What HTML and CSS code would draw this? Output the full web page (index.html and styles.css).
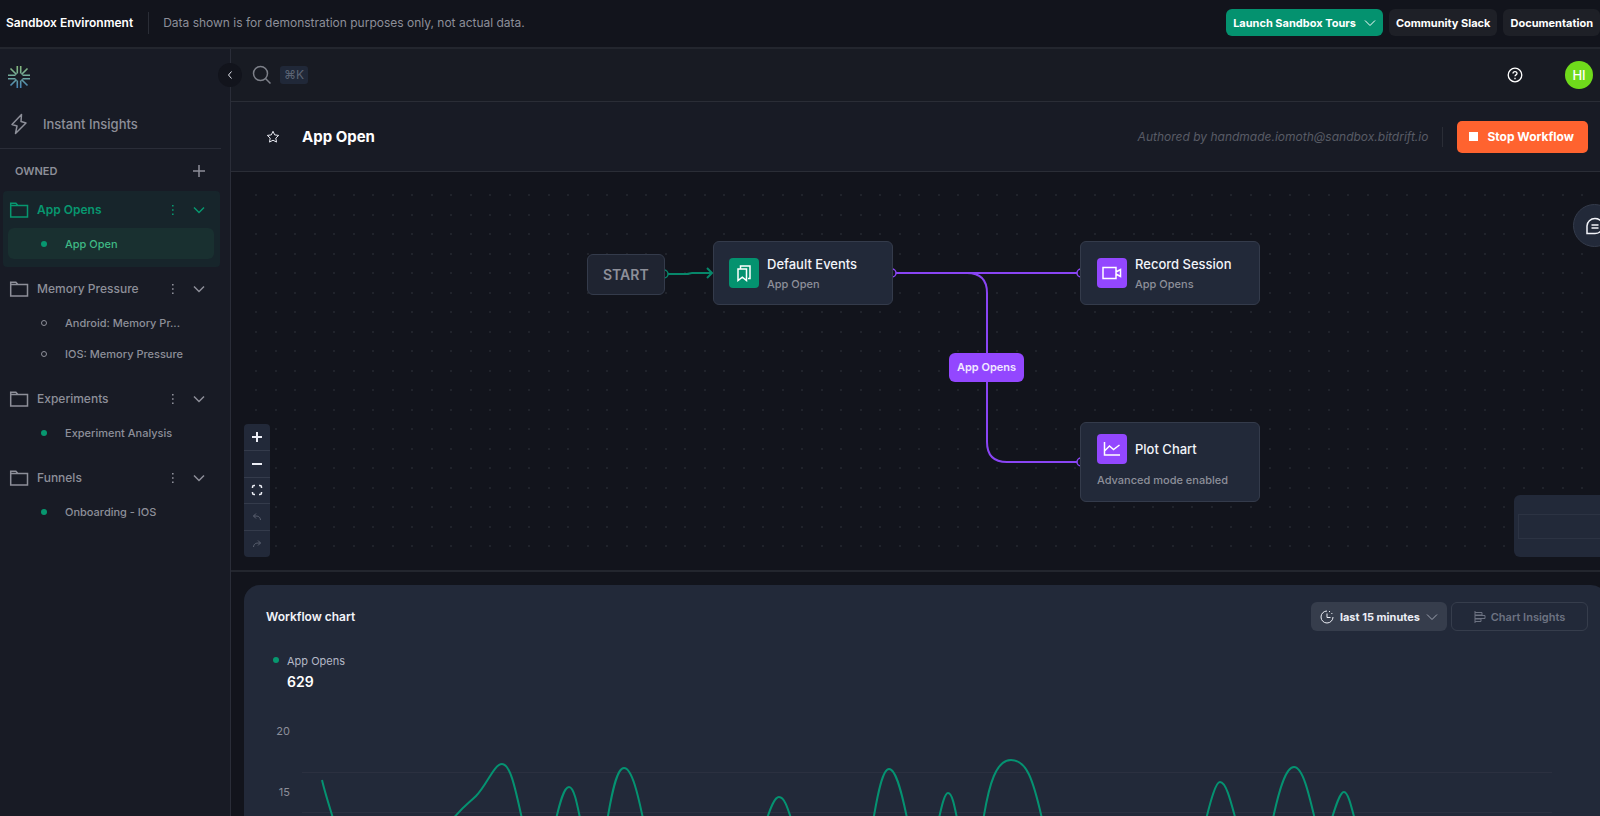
FILE: index.html
```
<!DOCTYPE html>
<html lang="en">
<head>
  <meta charset="UTF-8" />
  <meta name="viewport" content="width=device-width, initial-scale=1.0"/>
  <title>App Open - Workflow</title>
  <link rel="stylesheet" href="styles.css">
</head>
<body>
  <!-- shared icons -->
  <svg class="sprite" aria-hidden="true">
    <symbol id="folder" viewBox="0 0 20 20">
      <path d="M1.7 17V3.2h5.2l2 2.2h9.6V17zM1.7 5.4h7" />
    </symbol>
    <symbol id="chevron" viewBox="0 0 12 12">
      <path d="M1 3.5l5 5 5-5" />
    </symbol>
    <symbol id="dots" viewBox="0 0 4 12">
      <path d="M1 1h1.6v1.6H1zM1 5.2h1.6v1.6H1zM1 9.4h1.6V11H1z" />
    </symbol>
  </svg>

  <header class="sandbox-bar">
    <strong class="sandbox-title">Sandbox Environment</strong>
    <p class="sandbox-note">Data shown is for demonstration purposes only, not actual data.</p>
    <nav class="sandbox-links">
      <button class="btn btn-tours" type="button">Launch Sandbox Tours
        <svg class="icon-12"><use href="#chevron"/></svg>
      </button>
      <a class="btn btn-dark" href="#slack">Community Slack</a>
      <a class="btn btn-dark" href="#docs">Documentation</a>
    </nav>
  </header>

  <div class="shell">
    <aside class="sidebar">
      <a class="logo" href="#home" aria-label="Home">
        <svg width="22" height="22" viewBox="0 0 22 22">
          <defs>
            <linearGradient id="logoFill" gradientUnits="userSpaceOnUse" x1="0" y1="0" x2="0" y2="22">
              <stop offset="0" stop-color="#86b87c"/>
              <stop offset="0.5" stop-color="#6fa89f"/>
              <stop offset="1" stop-color="#4480b5"/>
            </linearGradient>
          </defs>
          <path stroke="url(#logoFill)" stroke-width="1.6" fill="none"
            d="M9.3 0v7.5M12.7 0v7.5M9.3 22v-7.5M12.7 22v-7.5M0 9.3h7.5M0 12.7h7.5M22 9.3h-7.5M22 12.7h-7.5M2.5 2.5l6 6M19.5 2.5l-6 6M2.5 19.5l6-6M19.5 19.5l-6-6"/>
        </svg>
      </a>
      <button class="collapse" type="button" aria-label="Collapse sidebar">
        <svg width="8" height="10" viewBox="0 0 8 10"><path d="M5.5 1.5L2.5 5l3 3.5"/></svg>
      </button>

      <a class="insights" href="#insights">
        <svg width="18" height="22" viewBox="0 0 18 22"><path d="M11.5 1.5L2 11.5l5 1.5-1.5 7.5L16 10l-5-1.5z"/></svg>
        Instant Insights
      </a>

      <div class="owned-head">
        <h2>OWNED</h2>
        <button type="button" aria-label="Add workflow">
          <svg width="12" height="12" viewBox="0 0 12 12"><path d="M6 0v12M0 6h12"/></svg>
        </button>
      </div>

      <ul class="groups">
        <li class="group active">
          <div class="group-row">
            <svg class="folder"><use href="#folder"/></svg>
            <span class="group-name">App Opens</span>
            <button type="button" aria-label="App Opens options"><svg class="kebab"><use href="#dots"/></svg></button>
            <button type="button" aria-label="Toggle App Opens"><svg class="icon-12"><use href="#chevron"/></svg></button>
          </div>
          <a class="item current" href="#app-open"><i class="dot"></i><span>App Open</span></a>
        </li>
        <li class="group">
          <div class="group-row">
            <svg class="folder"><use href="#folder"/></svg>
            <span class="group-name">Memory Pressure</span>
            <button type="button" aria-label="Memory Pressure options"><svg class="kebab"><use href="#dots"/></svg></button>
            <button type="button" aria-label="Toggle Memory Pressure"><svg class="icon-12"><use href="#chevron"/></svg></button>
          </div>
          <a class="item" href="#android"><i class="dot hollow"></i><span>Android: Memory Pr...</span></a>
          <a class="item" href="#ios"><i class="dot hollow"></i><span>IOS: Memory Pressure</span></a>
        </li>
        <li class="group">
          <div class="group-row">
            <svg class="folder"><use href="#folder"/></svg>
            <span class="group-name">Experiments</span>
            <button type="button" aria-label="Experiments options"><svg class="kebab"><use href="#dots"/></svg></button>
            <button type="button" aria-label="Toggle Experiments"><svg class="icon-12"><use href="#chevron"/></svg></button>
          </div>
          <a class="item" href="#experiment"><i class="dot"></i><span>Experiment Analysis</span></a>
        </li>
        <li class="group">
          <div class="group-row">
            <svg class="folder"><use href="#folder"/></svg>
            <span class="group-name">Funnels</span>
            <button type="button" aria-label="Funnels options"><svg class="kebab"><use href="#dots"/></svg></button>
            <button type="button" aria-label="Toggle Funnels"><svg class="icon-12"><use href="#chevron"/></svg></button>
          </div>
          <a class="item" href="#onboarding"><i class="dot"></i><span>Onboarding - IOS</span></a>
        </li>
      </ul>
    </aside>

    <main class="main">
      <div class="topbar">
        <button class="search" type="button" aria-label="Search">
          <svg width="20" height="20" viewBox="0 0 20 20"><circle cx="8.5" cy="8.5" r="7"/><path d="M13.5 13.5l5 5"/></svg>
          <kbd>⌘K</kbd>
        </button>
        <button class="help" type="button" aria-label="Help">
          <svg width="16" height="16" viewBox="0 0 16 16"><circle cx="8" cy="8" r="6.8"/><path d="M6 6.5c0-2.6 4-2.6 4 0 0 1.4-2 1.4-2 2.8M8 10.8v1.4"/></svg>
        </button>
        <button class="avatar" type="button">HI</button>
      </div>

      <div class="titlebar">
        <button class="star" type="button" aria-label="Favorite">
          <svg width="14" height="14" viewBox="0 0 14 14"><path d="M7 1.3l1.7 3.6 4 .5-2.9 2.7.7 4L7 10.2l-3.5 1.9.7-4L1.3 5.4l4-.5z"/></svg>
        </button>
        <h1>App Open</h1>
        <span class="author">Authored by handmade.iomoth@sandbox.bitdrift.io</span>
        <button class="btn-stop" type="button"><i></i>Stop Workflow</button>
      </div>

      <section class="canvas">
        <svg class="edges" width="1100" height="398" viewBox="0 0 1100 398">
          <g class="edge-green">
            <path d="M437 102h19c2 0 3-1 5-1h20M476 96l5 5-5 5"/>
            <circle cx="433" cy="102" r="4"/>
          </g>
          <g class="edge-purple">
            <path d="M665 101h182"/>
            <path d="M730 101h6q20 0 20 20v149q0 20 20 20h71"/>
            <circle cx="661" cy="101" r="4"/>
            <circle cx="850" cy="101" r="4"/>
            <circle cx="850" cy="290" r="4"/>
          </g>
        </svg>

        <div class="node node-start">START</div>
        <div class="node node-events">
          <span class="tile green">
            <svg width="16" height="18" viewBox="0 0 16 18"><path d="M2 5h8.5v11.5l-4.2-3.4L2 16.5zM4.5 5V2H14v12.5h-2"/></svg>
          </span>
          <div><h3>Default Events</h3><p>App Open</p></div>
        </div>
        <div class="node node-record">
          <span class="tile">
            <svg width="20" height="14" viewBox="0 0 20 14"><path d="M1 1.5h13v11H1zM14 6l4.5-2.5v7L14 8"/></svg>
          </span>
          <div><h3>Record Session</h3><p>App Opens</p></div>
        </div>
        <div class="node node-plot">
          <span class="tile">
            <svg width="18" height="16" viewBox="0 0 18 16"><path d="M1.5 1v13H17M1.5 10l5-5 4 3.5L16.5 4"/></svg>
          </span>
          <h3>Plot Chart</h3>
          <p>Advanced mode enabled</p>
        </div>
        <span class="edge-label">App Opens</span>

        <div class="zoom">
          <button type="button" aria-label="Zoom in"><svg viewBox="0 0 12 12"><path d="M6 1v10M1 6h10"/></svg></button>
          <button type="button" aria-label="Zoom out"><svg viewBox="0 0 12 12"><path d="M1 6h10"/></svg></button>
          <button type="button" aria-label="Fit view"><svg class="fit" viewBox="0 0 12 12"><path d="M1.5 4V3q0-1.5 1.5-1.5h1M8 1.5h1q1.5 0 1.5 1.5v1M10.5 8v1q0 1.5-1.5 1.5H8M4 10.5H3Q1.5 10.5 1.5 9V8"/></svg></button>
          <button type="button" aria-label="Undo" disabled><svg class="thin" viewBox="0 0 12 12"><path d="M5 2.5L2.5 5 5 7.5M2.5 5c4 0 6.5 0 7 4"/></svg></button>
          <button type="button" aria-label="Redo" disabled><svg class="thin" viewBox="0 0 12 12"><path d="M7 2.5L9.5 5 7 7.5M9.5 5c-4 0-6.5 0-7 4"/></svg></button>
        </div>

        <button class="chat" type="button" aria-label="Open chat">
          <svg width="20" height="20" viewBox="0 0 20 20"><path d="M2 17.5V10a8 7.5 0 1 1 8 7.5zM6.5 9h7M6.5 12h7"/></svg>
        </button>
        <div class="minimap"><span></span></div>
      </section>

      <section class="chart-card">
        <div class="chart-head">
          <h2>Workflow chart</h2>
          <label class="range">
            <svg width="14" height="14" viewBox="0 0 14 14"><path d="M7 1a6 6 0 1 0 6 6M7 3.5v4h3.5M9 1.3l1 .5M11.5 3l.7 1"/></svg>
            <select aria-label="Time range">
              <option>last 15 minutes</option>
            </select>
            <svg class="icon-12"><use href="#chevron"/></svg>
          </label>
          <button class="btn-insights" type="button">
            <svg width="12" height="12" viewBox="0 0 12 12"><path d="M1 0v12M1 1.5h7V4H1M1 4.5h10v3H1M1 8h6v2.5H1"/></svg>
            Chart Insights
          </button>
        </div>

        <div class="legend">
          <i class="dot"></i>
          <div><p>App Opens</p><strong>629</strong></div>
        </div>

        <div class="plot">
          <div class="axis"><span>20</span><span>15</span></div>
          <svg class="series" width="1290" height="130" viewBox="302 716 1290 130">
            <path class="grid" d="M302 772.5h1250M302 812.5h1250"/>
            <path class="line" d="M322 780C325 793 329 805 336 828
              M446 828C460 808 468 804 476 796C487 785 494 764 502 764C511 764 516 792 524 828
              M554 828C560 801 564 787 569 787C574 787 577 803 582 828
              M606 828C612 790 617 768 624 768C632 768 638 794 645 828
              M764 828C771 805 775 797 779 797C784 797 787 805 794 828
              M872 828C878 790 883 769 889 769C896 769 902 792 909 828
              M937 828C942 803 945 793 948 793C952 793 954 803 959 828
              M982 828C989 780 997 760 1011 760C1026 760 1033 776 1044 828
              M1204 828C1211 798 1216 782 1220 782C1226 782 1230 798 1238 828
              M1271 828C1279 788 1286 767 1294 767C1303 767 1309 794 1317 828
              M1329 828C1336 804 1340 792 1344 792C1348 792 1351 805 1357 828"/>
          </svg>
        </div>
      </section>
    </main>
  </div>
</body>
</html>
```
FILE: styles.css
```
* {
  box-sizing: border-box;
}

body {
  margin: 0;
  height: 100vh;
  display: flex;
  flex-direction: column;
  overflow: hidden;
  font-family: Inter, "Open Sans", sans-serif;
  font-size: 13px;
  line-height: 16px;
  color: #8d8f99;
  background: #12141c;
}

h1, h2, h3, p, ul {
  margin: 0;
  padding: 0;
}

button {
  font: inherit;
  color: inherit;
  background: none;
  border: 0;
  padding: 0;
  display: flex;
  align-items: center;
  justify-content: center;
}

a {
  color: inherit;
  text-decoration: none;
}

svg {
  fill: none;
  stroke: currentColor;
  flex: none;
}

.sprite {
  display: none;
}

.icon-12 {
  width: 12px;
  height: 12px;
}

/* sandbox bar */
.sandbox-bar {
  display: flex;
  align-items: center;
  flex: none;
  height: 49px;
  padding-left: 6px;
  padding-bottom: 2px;
  border-bottom: 2px solid #23262e;
}

.sandbox-title {
  color: #fff;
  font-weight: 600;
  font-size: 12px;
  padding-right: 15px;
}

.sandbox-note {
  border-left: 1px solid #2a2d36;
  padding: 3px 0 3px 14px;
  font-size: 12px;
}

.sandbox-links {
  margin-left: auto;
  display: flex;
  align-items: center;
  gap: 6px;
}

.btn {
  display: flex;
  align-items: center;
  gap: 8px;
  height: 27px;
  padding: 0 7px;
  border-radius: 6px;
  color: #fff;
  font-size: 11px;
  font-weight: 700;
  white-space: nowrap;
}

.btn-tours {
  background: #04926f;
}

.btn-dark {
  background: #1e2027;
}

.shell {
  flex: 1;
  min-height: 0;
  display: grid;
  grid-template-columns: 231px minmax(0, 1fr);
}

/* sidebar */
.sidebar {
  position: relative;
  display: flex;
  flex-direction: column;
  background: #181b25;
  border-right: 1px solid #2a2d38;
}

.logo {
  padding: 17px 8px 0;
  height: 52px;
}

.collapse {
  position: absolute;
  z-index: 2;
  right: -12px;
  top: 14px;
  width: 24px;
  height: 24px;
  border-radius: 12px;
  background: #12141c;
  color: #e4e6ee;
}

.insights {
  display: flex;
  align-items: center;
  gap: 15px;
  height: 48px;
  margin-right: 9px;
  padding: 0 10px 2px;
  border-bottom: 1px solid #2a2d38;
  font-weight: 500;
}

.insights svg {
  stroke-width: 1.5;
  stroke-linejoin: round;
}

.owned-head {
  display: flex;
  align-items: center;
  justify-content: space-between;
  height: 42px;
  padding: 2px 25px 0 15px;
}

.owned-head h2 {
  font-size: 11px;
  font-weight: 600;
}

.owned-head svg {
  stroke-width: 1.5;
}

.groups {
  list-style: none;
  display: flex;
  flex-direction: column;
  gap: 3px;
}

.group {
  margin: 0 10px 0 3px;
  padding-bottom: 8px;
  border-radius: 4px;
}

.group.active {
  background: #17252b;
  color: #07976f;
}

.group-row {
  display: flex;
  align-items: center;
  height: 37px;
  padding: 0 15px 0 6px;
}

.group-row .icon-12 {
  stroke-width: 1.5;
}

.folder {
  width: 20px;
  height: 20px;
  stroke-width: 1.5;
}

.group-name {
  flex: 1;
  padding-left: 8px;
  font-size: 12px;
  font-weight: 500;
}

.active .group-name {
  font-weight: 600;
}

.group-row button + button {
  margin-left: 18px;
}

.kebab {
  width: 4px;
  height: 12px;
  fill: currentColor;
  stroke: none;
}

.item {
  display: flex;
  align-items: center;
  gap: 18px;
  height: 31px;
  margin: 0 6px 0 5px;
  padding-left: 33px;
  font-size: 11px;
  font-weight: 500;
  border-radius: 6px;
}

.item.current {
  background: #193030;
  color: #3fb985;
}

.dot {
  width: 6px;
  height: 6px;
  border-radius: 3px;
  background: #07976f;
}

.dot.hollow {
  background: none;
  border: 1px solid #8d8f99;
}

/* main column */
.main {
  display: flex;
  flex-direction: column;
  min-height: 0;
  overflow: hidden;
}

.topbar {
  display: flex;
  align-items: center;
  flex: none;
  height: 53px;
  padding: 0 7px 0 21px;
  background: #181b23;
  border-bottom: 1px solid #2a2d36;
}

.search {
  gap: 8px;
  color: #7d8089;
}

.search svg {
  stroke-width: 1.5;
}

kbd {
  padding: 0 4px;
  border-radius: 3px;
  background: #202838;
  color: #5c6474;
  font-family: Inter, "DejaVu Sans", sans-serif;
  font-size: 12px;
  line-height: 18px;
}

.help {
  margin-left: auto;
  color: #fff;
}

.help svg {
  stroke-width: 1.3;
}

.avatar {
  width: 28px;
  height: 28px;
  margin-left: 42px;
  border-radius: 14px;
  background: #6fda1b;
  color: #fff;
  font-weight: 500;
}

.titlebar {
  display: flex;
  align-items: center;
  flex: none;
  height: 70px;
  padding: 0 12px 0 35px;
  background: #181b25;
  border-bottom: 1px solid #2a2d36;
}

.star {
  color: #e8eaf2;
}

h1 {
  margin-left: 22px;
  color: #fff;
  font-size: 15px;
  font-weight: 700;
}

.author {
  margin-left: auto;
  padding-right: 14px;
  border-right: 1px solid #2a2d36;
  color: #585b66;
  font-size: 12px;
  font-style: italic;
  line-height: 20px;
}

.btn-stop {
  gap: 9px;
  height: 32px;
  margin-left: 14px;
  padding: 0 14px 0 12px;
  border-radius: 5px;
  background: #ff632f;
  color: #fff;
  font-size: 12px;
  font-weight: 700;
}

.btn-stop i {
  width: 9px;
  height: 9px;
  background: #fff;
}

/* workflow canvas, the dot grid starts inside the padding */
.canvas {
  position: relative;
  flex: none;
  height: 400px;
  padding: 20px 0 12px 20px;
  overflow: hidden;
  border-bottom: 2px solid #23262e;
  background-image:
    radial-gradient(circle at 6px 23px, #20232b 1px, transparent 1px),
    radial-gradient(circle at 25px 23px, #20232b 1px, transparent 1px),
    radial-gradient(circle at 6px 4px, #20232b 1px, transparent 1px),
    radial-gradient(circle at 25px 4px, #20232b 1px, transparent 1px);
  background-size: 39px 39px;
  background-clip: content-box;
}

.edges {
  position: absolute;
  left: 0;
  top: 0;
}

.edge-green {
  stroke: #07876a;
  stroke-width: 2;
}

.edge-purple {
  stroke: #8a45f5;
  stroke-width: 2;
}

.edges circle {
  fill: #12141c;
  stroke-width: 1.5;
}

.node {
  position: absolute;
  display: flex;
  align-items: center;
  gap: 8px;
  padding: 0 15px;
  border: 1px solid #343b4b;
  border-radius: 6px;
  background: #222939;
}

.node h3 {
  color: #f2f4fa;
  font-size: 13px;
  font-weight: 500;
  line-height: 20px;
}

.node p {
  font-size: 11px;
  font-weight: 500;
  line-height: 20px;
}

.node div {
  padding-top: 2px;
}

.node-start {
  left: 356px;
  top: 82px;
  height: 41px;
  background: #1f2431;
  font-size: 14px;
  font-weight: 600;
}

.node-events {
  left: 482px;
  top: 69px;
  width: 180px;
  height: 64px;
}

.node-record,
.node-plot {
  left: 849px;
  width: 180px;
  padding: 0 16px;
}

.node-record {
  top: 69px;
  height: 64px;
}

.node-plot {
  top: 250px;
  height: 80px;
  flex-wrap: wrap;
  align-content: center;
  row-gap: 6px;
}

.node-plot p {
  width: 100%;
}

.tile {
  display: flex;
  align-items: center;
  justify-content: center;
  width: 30px;
  height: 30px;
  border-radius: 4px;
  background: #9347ff;
  color: #fff;
}

.tile.green {
  background: #04926f;
}

.tile svg {
  stroke-width: 1.5;
}

.edge-label {
  position: absolute;
  left: 718px;
  top: 181px;
  padding: 0 8px;
  border-radius: 6px;
  background: #9347ff;
  color: #f1e8ff;
  font-size: 11px;
  font-weight: 600;
  line-height: 29px;
}

.zoom {
  position: absolute;
  left: 13px;
  bottom: 13px;
  display: flex;
  flex-direction: column;
  width: 26px;
  height: 133px;
  border-radius: 4px;
  background: #222939;
  color: #eceef5;
}

.zoom button {
  flex: 1;
  border-bottom: 1px solid #343b4b;
}

.zoom button:last-child {
  border-bottom: 0;
}

.zoom button:disabled {
  color: #5b6170;
}

.zoom svg {
  width: 12px;
  height: 12px;
  stroke-width: 2;
}

.zoom .fit {
  stroke-width: 1.5;
}

.zoom .thin {
  stroke-width: 1;
}

.chat {
  position: absolute;
  right: -16px;
  top: 32px;
  width: 43px;
  height: 43px;
  border: 1px solid #343b4b;
  border-radius: 22px;
  background: #222939;
  color: #f2f4fa;
}

.chat svg {
  stroke-width: 1.5;
}

.minimap {
  position: absolute;
  right: -14px;
  bottom: 13px;
  width: 100px;
  height: 62px;
  padding: 19px 0 18px 4px;
  border-radius: 6px;
  background: #222939;
}

.minimap span {
  display: block;
  height: 25px;
  border: 1px solid #2c3343;
}

/* chart */
.chart-card {
  flex: none;
  margin: 13px -7px 0 13px;
  padding: 17px 19px 0 22px;
  border-radius: 16px;
  background: #222939;
}

.chart-head {
  display: flex;
  align-items: center;
  gap: 4px;
}

.chart-head h2 {
  flex: 1;
  color: #f2f4fa;
  font-size: 12px;
  font-weight: 600;
}

.range {
  display: flex;
  align-items: center;
  gap: 6px;
  height: 29px;
  padding: 0 9px;
  border-radius: 6px;
  background: #363d4c;
  color: #eceef5;
}

.range .icon-12 {
  color: #9ea3b0;
}

.range select {
  appearance: none;
  padding: 0;
  border: 0;
  background: none;
  color: inherit;
  font: inherit;
  font-size: 11px;
  font-weight: 700;
}

.btn-insights {
  gap: 5px;
  width: 137px;
  height: 29px;
  border: 1px solid #363d4c;
  border-radius: 6px;
  color: #6d7382;
  font-size: 11px;
  font-weight: 600;
}

.legend {
  display: flex;
  gap: 8px;
  padding: 21px 0 0 7px;
}

.legend .dot {
  margin-top: 5px;
}

.legend p {
  color: #b4b8c6;
  font-size: 11px;
  line-height: 18px;
}

.legend strong {
  color: #fff;
  font-size: 14px;
  font-weight: 600;
  line-height: 24px;
}

.plot {
  display: flex;
  padding-top: 22px;
}

.axis {
  display: flex;
  flex: none;
  flex-direction: column;
  gap: 45px;
  width: 24px;
  margin-right: 12px;
  text-align: right;
  font-size: 11px;
  padding-top: 7px;
}

.series .grid {
  stroke: #2b3040;
}

.series .line {
  stroke: #059271;
  stroke-width: 2;
}
```
